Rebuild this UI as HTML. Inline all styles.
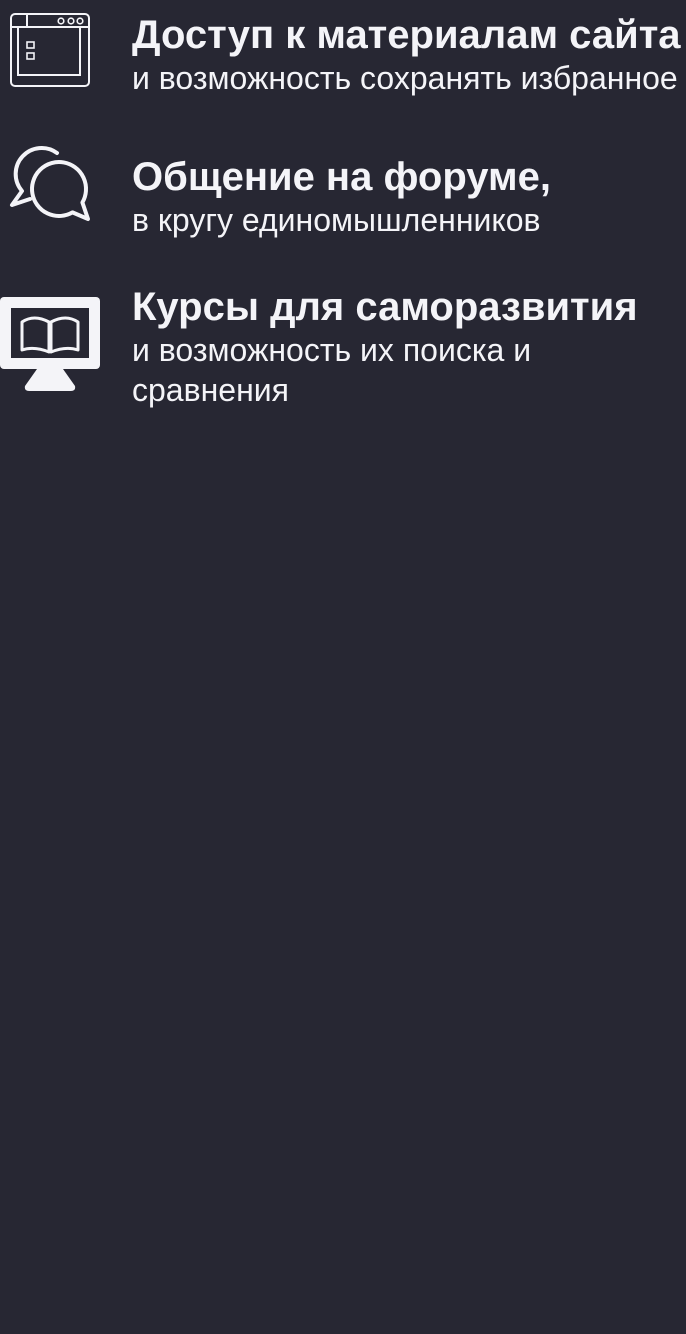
<!DOCTYPE html>
<html><head><meta charset="utf-8"><style>
html,body{margin:0;padding:0;background:#272733;width:686px;height:1334px;overflow:hidden}
body{font-family:"Liberation Sans",sans-serif;color:#f4f4f8;position:relative}
.t{position:absolute;left:132px;font-weight:bold;font-size:40px;line-height:40px;white-space:nowrap}
.s{position:absolute;left:132px;font-size:32px;line-height:40px;white-space:nowrap}
svg{position:absolute;left:0;top:0}
</style></head><body>
<svg width="110" height="400" viewBox="0 0 110 400" fill="none" stroke="#f4f4f8">
 <rect x="11" y="14" width="78" height="72" rx="4" stroke-width="2"/>
 <line x1="11" y1="27" x2="89" y2="27" stroke-width="2"/>
 <line x1="27" y1="14" x2="27" y2="27" stroke-width="2"/>
 <rect x="18" y="27" width="62" height="48" stroke-width="2"/>
 <circle cx="61" cy="21" r="2.8" stroke-width="1.6"/>
 <circle cx="71" cy="21" r="2.8" stroke-width="1.6"/>
 <circle cx="80" cy="21" r="2.8" stroke-width="1.6"/>
 <rect x="27" y="42" width="7" height="6" stroke-width="1.6"/>
 <rect x="27" y="53" width="7" height="6" stroke-width="1.6"/>
 <path d="M57 153 A26 26 0 0 0 22 191 L12 205 L30 199" stroke-width="4" stroke-linecap="round" stroke-linejoin="round"/>
 <path d="M82.4 202.5 A27 27 0 1 0 72.5 212.4 L88 219 Z" stroke-width="4" stroke-linecap="round" stroke-linejoin="round"/>
 <rect x="0" y="297" width="100" height="72" rx="4" fill="#f4f4f8" stroke="none"/>
 <rect x="11" y="308" width="78" height="50" fill="#272733" stroke="none"/>
 <path d="M37 369 L63 369 L75 386 Q76 391 71 391 L29 391 Q24 391 25 386 Z" fill="#f4f4f8" stroke="none"/>
 <path d="M22 322 Q34 314 49 322 L49 352 Q34 346 22 350 Z M78 322 Q66 314 51 322 L51 352 Q66 346 78 350 Z" stroke-width="3" stroke-linejoin="round"/>
</svg>
<div class="t" style="top:15px">Доступ к материалам сайта</div>
<div class="s" style="top:58px">и возможность сохранять избранное</div>
<div class="t" style="top:157px">Общение на форуме,</div>
<div class="s" style="top:200px">в кругу единомышленников</div>
<div class="t" style="top:287px">Курсы для саморазвития</div>
<div class="s" style="top:330px">и возможность их поиска и<br>сравнения</div>
</body></html>
